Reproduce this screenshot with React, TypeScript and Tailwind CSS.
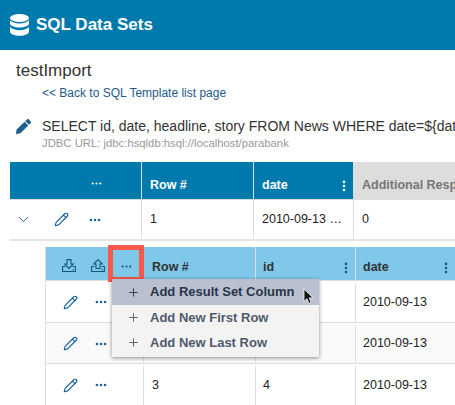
import { Pencil, Ellipsis, EllipsisVertical, ChevronDown, Plus } from "lucide-react"

function DatabaseSolid() {
  return (
    <svg width="19" height="22" viewBox="0 0 19 22" fill="white">
      <ellipse cx="9.500" cy="4" rx="9.500" ry="4" />
      <path d="M0 6.200c1.500 2 5.500 3.200 9.500 3.200s8-1.200 9.500-3.200v3.300c0 2.200-4.300 4-9.500 4S0 11.700 0 9.500z" />
      <path d="M0 13c1.500 2 5.500 3.200 9.500 3.200S17.500 15 19 13v4.800c0 2.200-4.300 4-9.500 4S0 20 0 17.800z" />
    </svg>
  )
}

function PencilSolid() {
  return (
    <svg className="shrink-0" width="15" height="15" viewBox="0 0 512 512" fill="#1f5f8f">
      <path d="M497.900 142.100l-46.100 46.100c-4.700 4.700-12.300 4.700-17 0l-111-111c-4.700-4.700-4.700-12.300 0-17l46.100-46.100c18.700-18.700 49.100-18.700 67.900 0l60.100 60.100c18.800 18.700 18.800 49.100 0 67.900zM284.200 99.800L21.600 362.400.4 483.900c-2.900 16.400 11.400 30.600 27.800 27.800l121.500-21.300 262.600-262.600c4.700-4.700 4.700-12.300 0-17l-111-111c-4.800-4.700-12.400-4.700-17.100 0z" />
    </svg>
  )
}

function TrayArrow({ up }: { up?: boolean }) {
  return (
    <svg className="mt-[-2px]" width="14" height="13" viewBox="0 0 14 13" fill="none" stroke="#17557f" strokeWidth="1.100">
      <path d="M3.500 7.500H.6v5h12.800v-5h-2.900" />
      <path d={up ? "M7 .7l4.300 4.300H9v4.500H5V5H2.700z" : "M5 .6h4v4.400h2.300L7 9.500 2.700 5H5z"} />
      <path d="M10.500 10.700h1.500" />
    </svg>
  )
}

// rows one and two sit behind the open menu, so their number cells stay blank
function DataRow({ n, id, shade }: { n?: string; id?: string; shade?: boolean }) {
  return (
    <div className={`flex h-[41.500px] border-b border-[#dddddd] pt-[2px] text-[12.500px] text-[#222222] ${shade ? "bg-[#fafafa]" : "bg-white"}`}>
      <div className="flex w-[98px] shrink-0 items-center gap-[16px] border-r border-[#dddddd] pl-[17px]">
        <Pencil size={15} strokeWidth={1.800} className="text-[#17609a]" />
        <Ellipsis size={14} strokeWidth={2.500} className="text-[#17609a]" />
      </div>
      <div className="flex w-[112px] shrink-0 items-center border-r border-[#dddddd] pl-[8px]">{n}</div>
      <div className="flex w-[100px] shrink-0 items-center border-r border-[#dddddd] pl-[7px]">{id}</div>
      <div className="flex flex-1 items-center pl-[7px]">2010-09-13</div>
    </div>
  )
}

function MenuItem({ label, active }: { label: string; active?: boolean }) {
  return (
    <div className={`flex items-center gap-[10px] pl-[15px] text-[13px] font-bold ${active ? "h-[26px] bg-[#b9c0cf] text-[#2b3548]" : "h-[25px] text-[#505a6b]"}`}>
      <Plus size={13} strokeWidth={1.700} />
      <span>{label}</span>
    </div>
  )
}

export default function App() {
  return (
    <div className="relative h-[405px] w-[455px] overflow-hidden bg-white font-['Liberation_Sans',Arial,sans-serif]">
      <header className="flex h-[50px] items-center gap-[7px] bg-[#007aad] pl-[10px] text-white">
        <DatabaseSolid />
        <h1 className="text-[17px] font-bold">SQL Data Sets</h1>
      </header>

      <div className="pl-[16px] pt-[11px]">
        <div className="text-[17px] leading-[20px] text-[#333333]">testImport</div>
        <a className="mt-[5px] block pl-[26px] text-[12px] leading-[14px] text-[#1d5a8c]">&lt;&lt; Back to SQL Template list page</a>
        <div className="mt-[18px] flex items-center gap-[11px] whitespace-nowrap text-[14px] leading-[16px] text-[#333333]">
          <PencilSolid />
          <span className="shrink-0">SELECT id, date, headline, story FROM News WHERE date=${"{"}date{"}"}</span>
        </div>
        <div className="mt-[2px] pl-[26px] text-[11.300px] leading-[14px] text-[#999999]">JDBC URL: jdbc:hsqldb:hsql://localhost/parabank</div>
      </div>

      <div className="ml-[10px] mt-[12px]">
        <div className="flex h-[38px] border-b border-[#dddddd] text-[12.500px] font-bold text-white">
          <div className="flex w-[132px] shrink-0 items-center justify-end border-r border-[#dddddd] bg-[#007aad] pr-[38px] pt-[6px]">
            <Ellipsis size={13} strokeWidth={2} />
          </div>
          <div className="flex w-[112px] shrink-0 items-center border-r border-[#dddddd] bg-[#007aad] pl-[8px] pt-[10px]">Row #</div>
          <div className="flex w-[100px] shrink-0 items-center justify-between border-r border-[#dddddd] bg-[#007aad] pl-[8px] pr-[2px] pt-[10px]">
            <span>date</span>
            <EllipsisVertical size={14} strokeWidth={2.500} />
          </div>
          <div className="flex flex-1 items-center overflow-hidden whitespace-nowrap bg-[#dddddd] pl-[8px] pt-[10px] text-[#777777]">Additional Response</div>
        </div>
        <div className="flex h-[41px] border-b-2 border-[#e4e4e4] text-[12.500px] text-[#222222]">
          <div className="flex w-[132px] shrink-0 items-center border-r border-[#dddddd] pl-[5px]">
            <ChevronDown size={17} strokeWidth={1.300} className="text-[#17557f]" />
            <Pencil size={15} strokeWidth={1.800} className="ml-[22px] text-[#17609a]" />
            <Ellipsis size={14} strokeWidth={2.500} className="ml-[19px] text-[#17609a]" />
          </div>
          <div className="flex w-[112px] shrink-0 items-center border-r border-[#dddddd] pl-[8px]">1</div>
          <div className="flex w-[100px] shrink-0 items-center border-r border-[#dddddd] pl-[8px]">2010-09-13 …</div>
          <div className="flex flex-1 items-center pl-[8px]">0</div>
        </div>

        <div className="ml-[35px] mt-[6px] border-l border-[#dddddd]">
          <div className="flex h-[34px] border-b border-[#dddddd] bg-[#7fc8e9] text-[12.500px] font-bold text-[#333333]">
            <div className="flex w-[98px] shrink-0 items-center gap-[15px] border-r border-[#dddddd] pl-[16px] pt-[6px]">
              <TrayArrow />
              <TrayArrow up />
              <Ellipsis size={13} strokeWidth={2} className="text-[#17557f]" />
            </div>
            <div className="flex w-[112px] shrink-0 items-center border-r border-[#dddddd] pl-[8px] pt-[8px]">Row #</div>
            <div className="flex w-[100px] shrink-0 items-center justify-between border-r border-[#dddddd] pl-[7px] pr-[2px] pt-[8px]">
              <span>id</span>
              <EllipsisVertical size={14} strokeWidth={2.500} className="text-[#17557f]" />
            </div>
            <div className="flex flex-1 items-center justify-between pl-[7px] pr-[2px] pt-[8px]">
              <span>date</span>
              <EllipsisVertical size={14} strokeWidth={2.500} className="text-[#17557f]" />
            </div>
          </div>
          <DataRow />
          <DataRow shade />
          <DataRow n="3" id="4" />
        </div>
      </div>

      {/* red highlight around the column menu button */}
      <div className="absolute left-[108px] top-[245px] h-[37px] w-[36px] border-[5px] border-[#f9584b]" />

      <div className="absolute left-[112px] top-[279px] w-[207px] bg-[#f3f3f3] pb-[2px] shadow-[0_1px_4px_rgba(0,0,0,0.45)]">
        <MenuItem label="Add Result Set Column" active />
        <MenuItem label="Add New First Row" />
        <MenuItem label="Add New Last Row" />
      </div>

      <svg className="absolute left-[303px] top-[288px]" width="12" height="17" viewBox="0 0 12 17">
        <path d="M1 1v12.500l3-2.800 2 4.800 2.200-1-2-4.600h4z" fill="#111111" stroke="white" strokeWidth="0.800" />
      </svg>
    </div>
  )
}
